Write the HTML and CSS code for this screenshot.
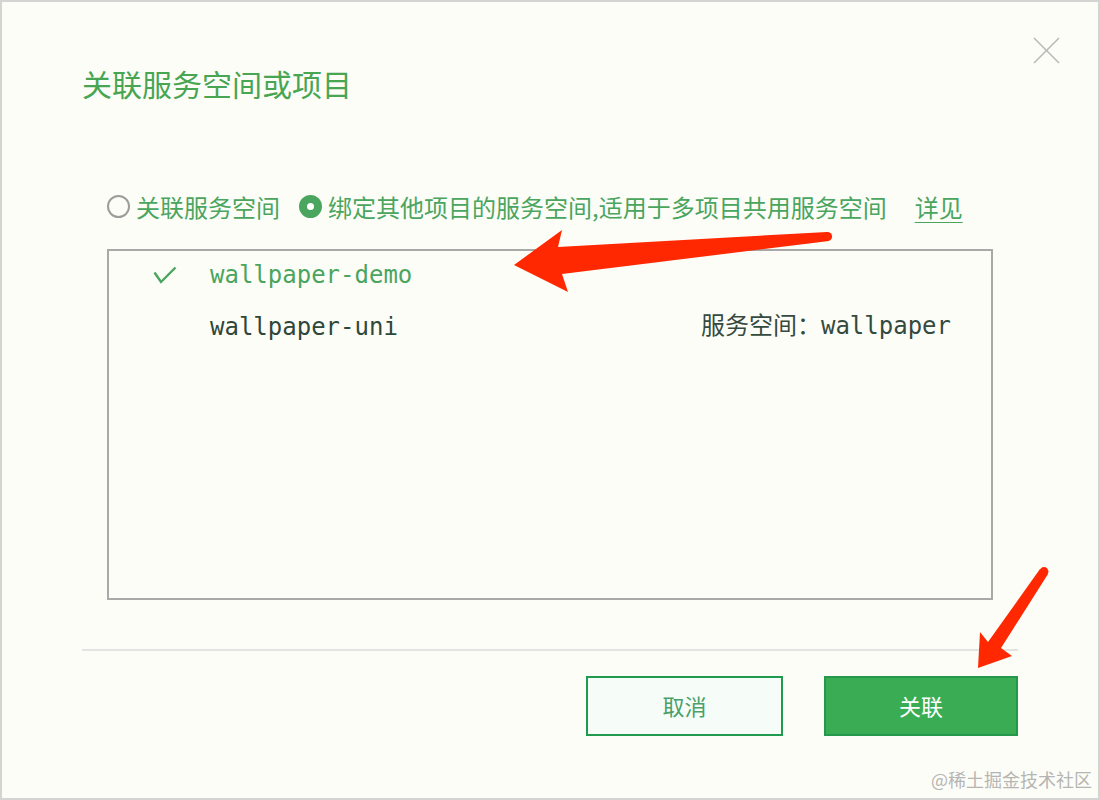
FILE: index.html
```html
<!DOCTYPE html>
<html lang="zh-CN">
<head>
    <meta charset="UTF-8">
    <meta name="viewport" content="width=device-width, initial-scale=1.0">
    <title>关联服务空间或项目</title>
    <link rel="stylesheet" href="styles.css">
</head>
<body>
    <div class="dialog">
        <div class="dialog-head">
            <h1 class="dialog-title">关联服务空间或项目</h1>
            <button class="close-btn" aria-label="关闭">
                <svg width="27" height="27" viewBox="0 0 27 27">
                    <line x1="1" y1="1" x2="26" y2="26" />
                    <line x1="26" y1="1" x2="1" y2="26" />
                </svg>
            </button>
        </div>

        <div class="dialog-body">
            <div class="options">
                <label class="radio"><span class="radio-dot"></span>关联服务空间</label>
                <label class="radio checked"><span class="radio-dot"></span>绑定其他项目的服务空间,适用于多项目共用服务空间</label>
                <a class="more-link">详见</a>
            </div>

            <ul class="space-list">
                <li class="space-item selected">
                    <svg class="check" width="24" height="18" viewBox="0 0 24 18">
                        <path d="M1.5 6.5 L8 16 L22.5 1.5" />
                    </svg>
                    <span class="space-name">wallpaper-demo</span>
                </li>
                <li class="space-item">
                    <span class="check"></span>
                    <span class="space-name">wallpaper-uni</span>
                    <span class="space-meta">服务空间：wallpaper</span>
                </li>
            </ul>
        </div>

        <div class="dialog-foot">
            <button class="btn btn-cancel">取消</button>
            <button class="btn btn-ok">关联</button>
        </div>
    </div>

    <!-- annotation arrows drawn over the screenshot -->
    <svg class="arrows" width="1100" height="800" viewBox="0 0 1100 800">
        <path d="M514 265 L562 230 L558 247 L827 232 L829 241 L562 274 L568 292 Z" />
        <circle cx="827.5" cy="236.5" r="4.6" />
        <path d="M1040 569 L988 642 L980 632 L978 668 L1012 656 L1001 648 L1048 574 Z" />
        <circle cx="1044" cy="571.5" r="4.4" />
    </svg>

    <div class="watermark">@稀土掘金技术社区</div>
</body>
</html>
```

FILE: styles.css
```css
body {
    margin: 0;
    position: relative;
    width: 1100px;
    height: 800px;
    overflow: hidden;
    font-family: "Noto Sans CJK SC", "Noto Sans", sans-serif;
    background-color: #fdfdf8;
}
.dialog {
    width: 1100px;
    height: 800px;
    box-sizing: border-box;
    border: 2px solid #d4d4d2;
    background-color: #fdfdf8;
}
.dialog-head {
    display: flex;
    justify-content: space-between;
    align-items: flex-start;
    padding: 35px 38px 0 80px;
}
.dialog-title {
    margin: 25px 0 0;
    font-size: 30px;
    font-weight: normal;
    line-height: 42px;
    color: #48a552;
}
.close-btn {
    width: 27px;
    height: 27px;
    padding: 0;
    border: none;
    background: none;
}
.close-btn svg {
    display: block;
}
.close-btn line {
    stroke: #b9b9b7;
    stroke-width: 1.6;
}
.dialog-body {
    padding: 0 105px;
}
.options {
    display: flex;
    align-items: center;
    height: 32px;
    margin-top: 86px;
    font-size: 24px;
    color: #4aa55e;
}
.radio {
    display: flex;
    align-items: center;
    gap: 6px;
    margin-right: 19px;
    white-space: nowrap;
}
.radio-dot {
    position: relative;
    width: 23px;
    height: 23px;
    box-sizing: border-box;
    border: 2px solid #9c9c9a;
    border-radius: 50%;
}
.radio.checked .radio-dot {
    border-color: #4aa55e;
    background-color: #4aa55e;
}
.radio.checked .radio-dot::after {
    content: "";
    position: absolute;
    left: 6px;
    top: 6px;
    width: 7px;
    height: 7px;
    border-radius: 50%;
    background: #fff;
}
.more-link {
    margin-left: 9px;
    color: #4aa55e;
    text-decoration: underline;
    text-underline-offset: 5px;
    text-decoration-thickness: 1px;
    cursor: pointer;
}
.space-list {
    list-style: none;
    margin: 27px 0 0;
    padding: 0 40px 0 44px;
    height: 351px;
    box-sizing: border-box;
    border: 2px solid #a9a9a7;
    display: flex;
    flex-direction: column;
    gap: 4px;
}
.space-item {
    display: flex;
    align-items: center;
    height: 48px;
    font-family: "DejaVu Sans Mono", "Noto Sans CJK SC", monospace;
    font-size: 24px;
    color: #2e473a;
}
.space-item .check {
    width: 24px;
    height: 18px;
    margin-right: 33px;
    flex: none;
}
.check path {
    fill: none;
    stroke: #4aa55e;
    stroke-width: 2.4;
}
.space-item.selected {
    color: #4aa55e;
}
.space-name {
    flex: 1;
}
.space-meta {
    color: #354a3e;
    line-height: 1;
    margin-top: -3px;
}
.dialog-foot {
    display: flex;
    justify-content: flex-end;
    gap: 41px;
    margin: 49px 80px 0;
    padding-top: 25px;
    border-top: 2px solid #e3e3e1;
}
.btn {
    height: 60px;
    padding: 0 0 2px;
    font-family: "Noto Sans CJK SC", sans-serif;
    font-size: 22px;
    border: 2px solid #1f9a4e;
    cursor: pointer;
}
.btn-cancel {
    width: 197px;
    background-color: #f6fdf9;
    color: #4b9f68;
}
.btn-ok {
    width: 194px;
    background-color: #3aad54;
    border-color: #24994b;
    color: #fff;
}
.arrows {
    position: absolute;
    top: 0;
    left: 0;
    pointer-events: none;
}
.arrows path,
.arrows circle {
    fill: #ff2800;
}
.watermark {
    position: absolute;
    right: 8px;
    bottom: 8px;
    font-size: 18px;
    color: #b5b5b3;
}
```
